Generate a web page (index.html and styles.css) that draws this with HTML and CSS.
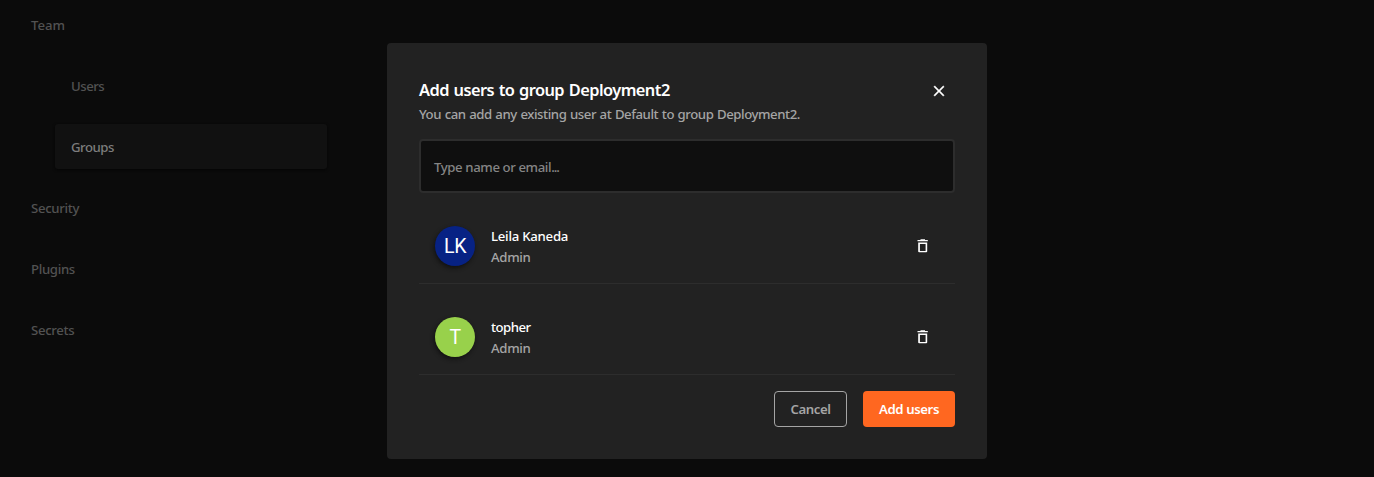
FILE: index.html
```html
<!DOCTYPE html>
<html lang="en">
<head>
<meta charset="utf-8">
<title>Groups</title>
<link rel="stylesheet" href="styles.css">
</head>
<body>
<nav class="sidebar">
  <a class="nav-item t-team">Team</a>
  <a class="nav-item nested">Users</a>
  <a class="nav-item nested active">Groups</a>
  <a class="nav-item">Security</a>
  <a class="nav-item">Plugins</a>
  <a class="nav-item">Secrets</a>
</nav>
<div class="overlay">
  <section class="dialog">
    <header class="dialog-header">
      <div>
        <h1 class="title">Add users to group Deployment2</h1>
        <p class="subtitle">You can add any existing user at Default to group Deployment2.</p>
      </div>
      <svg class="close" viewBox="0 0 24 24"><path d="M19 6.410 17.590 5 12 10.590 6.410 5 5 6.410 10.590 12 5 17.590 6.410 19 12 13.410 17.590 19 19 17.590 13.410 12z"/></svg>
    </header>
    <div class="search"><span class="placeholder">Type name or email<span class="dots">...</span></span></div>
    <ul class="users">
      <li class="user">
        <span class="avatar blue">LK</span>
        <div class="info"><span class="name">Leila Kaneda</span><span class="role">Admin</span></div>
        <svg class="trash" viewBox="0 0 16 16"><path d="M5.500 1.200h4.500v.8h2.800v1.300h-10.300V2h3zM3.200 4.500h9v9q0 .8-1 .8h-7q-1 0-1-.8zM4.900 5.900v7h5.700v-7z"/></svg>
      </li>
      <li class="user">
        <span class="avatar green">T</span>
        <div class="info"><span class="name short">topher</span><span class="role">Admin</span></div>
        <svg class="trash" viewBox="0 0 16 16"><path d="M5.500 1.200h4.500v.8h2.800v1.300h-10.300V2h3zM3.200 4.500h9v9q0 .8-1 .8h-7q-1 0-1-.8zM4.900 5.900v7h5.700v-7z"/></svg>
      </li>
    </ul>
    <footer class="actions">
      <button class="btn cancel">Cancel</button>
      <button class="btn primary">Add users</button>
    </footer>
  </section>
</div>
</body>
</html>
```
FILE: styles.css
```css
* { box-sizing: border-box; }
body {
  margin: 0;
  height: 477px;
  overflow: hidden;
  background: #0b0b0b;
  font: 500 13.2px/20px "Noto Sans", sans-serif;
  letter-spacing: -0.34px;
  color: #a5a5a5;
}
.sidebar {
  display: flex;
  flex-direction: column;
  gap: 16px;
  width: 327px;
  padding: 2px 0 0 15px;
}
.nav-item {
  display: flex;
  align-items: center;
  height: 45px;
  padding: 0 16px;
  border-radius: 3px;
  color: #525252;
}
.t-team { letter-spacing: 0; }
.nested { margin-left: 40px; letter-spacing: -0.48px; }
.active {
  background: #111;
  color: #7d7d7d;
  box-shadow: 0 1px 3px #050505;
}
.overlay {
  position: absolute;
  inset: 0;
  display: flex;
  justify-content: center;
  align-items: flex-start;
  padding-top: 43px;
}
.dialog {
  width: 600px;
  height: 416px;
  padding: 35px 32px 32px;
  border-radius: 4px;
  background: #222;
}
.dialog-header {
  display: flex;
  justify-content: space-between;
  height: 61px;
}
.title {
  margin: 0;
  font-size: 16.4px;
  line-height: 24px;
  font-weight: 600;
  letter-spacing: -0.55px;
  word-spacing: 0.9px;
  color: #fff;
}
.subtitle { margin: 2px 0 0; line-height: 20px; letter-spacing: -0.44px; word-spacing: 0.6px; }
.close { width: 18px; height: 18px; margin: 4px 7px 0 0; fill: #fff; stroke: #fff; stroke-width: 0.4; }
.search {
  display: flex;
  align-items: center;
  height: 54px;
  padding: 1px 13px 0;
  border: 2px solid #2d2d2d;
  border-radius: 4px;
  background: #0f0f0f;
}
.placeholder { color: #858585; letter-spacing: -0.4px; }
.dots { letter-spacing: -1.1px; }
.users { margin: 0; padding: 0; list-style: none; }
.user {
  display: flex;
  align-items: center;
  height: 91px;
  padding: 16px 24px 0 16px;
  border-bottom: 1px solid #2d2d2d;
}
.avatar {
  width: 40px;
  height: 40px;
  margin-right: 16px;
  border-radius: 50%;
  font: 400 19.5px/42px Roboto, sans-serif;
  letter-spacing: -0.4px;
  text-align: center;
  color: #fff;
  box-shadow: -1px 2px 4px #111;
}
.blue { background: #072284; }
.green { background: #98d14b; }
.info { display: flex; flex-direction: column; flex: 1; padding-top: 2px; line-height: 21px; }
.name { color: #fff; letter-spacing: -0.25px; }
.short { letter-spacing: -0.5px; }
.trash { width: 16px; height: 16px; fill: #fff; }
.actions { display: flex; justify-content: flex-end; gap: 16px; padding-top: 16px; }
.btn {
  height: 36px;
  padding: 0 0 1px;
  border: 0;
  border-radius: 4px;
  font: 600 13.2px/20px "Noto Sans", sans-serif;
  letter-spacing: -0.4px;
}
.cancel { width: 73px; border: 1px solid #a5a5a5; background: transparent; color: #a5a5a5; }
.primary { width: 92px; background: #ff6720; color: #fff; }
```
